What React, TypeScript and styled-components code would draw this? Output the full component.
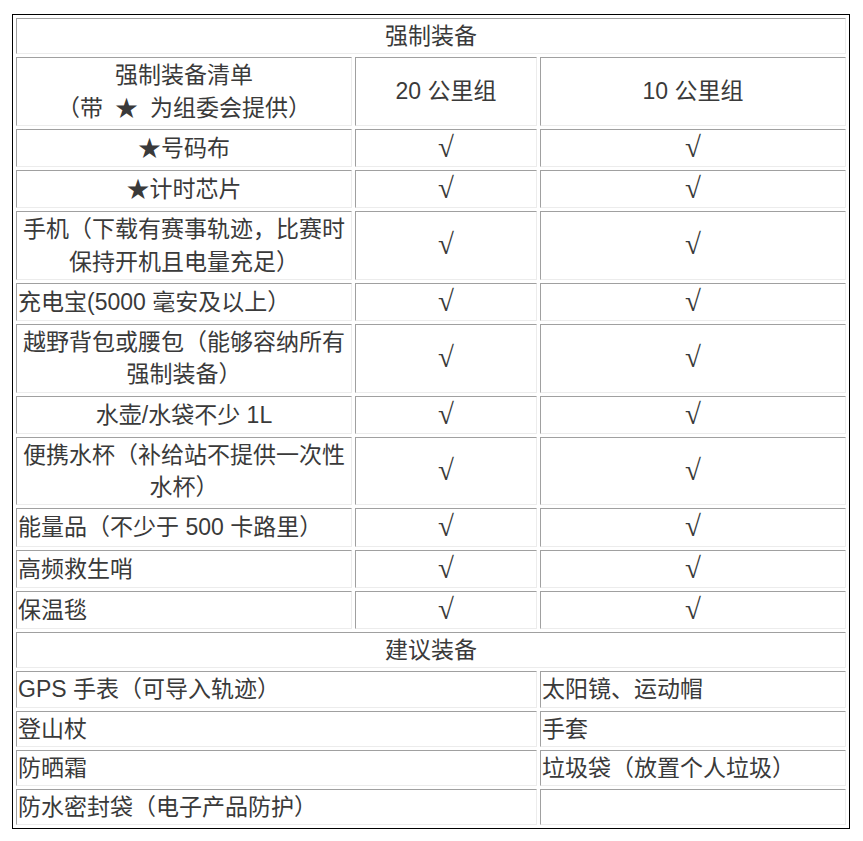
import styled, { createGlobalStyle } from "styled-components";

const GlobalStyle = createGlobalStyle`
  html, body {
    margin: 0;
    padding: 0;
    background: #fff;
  }
  body {
    font-family: "Liberation Sans", "Noto Sans CJK SC", sans-serif;
    color: #3a3a3a;
  }
`;

const Page = styled.div`
  padding: 14px 0 12px 12px;
`;

const Table = styled.table`
  width: 838px;
  table-layout: fixed;
  border-collapse: separate;
  border-spacing: 3px;
  border: 1px solid #000;
  font-size: 23px;
  line-height: 32.25px;
  color: #3a3a3a;
`;

const Cell = styled.td<{ $align?: "left" | "center" }>`
  padding: 1px;
  border: 1px solid;
  border-color: #a0a0a0 #ececec #ececec #a0a0a0;
  text-align: ${(p) => p.$align ?? "center"};
  vertical-align: middle;
`;

const Check = styled.span`
  font-family: "Liberation Serif", serif;
  font-size: 29px;
`;

const Gap = styled.span`
  display: inline-block;
  width: 12px;
`;

type Req = { name: string; align?: "left" | "center" };

const required: Req[] = [
  { name: "★号码布" },
  { name: "★计时芯片" },
  { name: "手机（下载有赛事轨迹，比赛时保持开机且电量充足）" },
  { name: "充电宝(5000 毫安及以上）", align: "left" },
  { name: "越野背包或腰包（能够容纳所有强制装备）" },
  { name: "水壶/水袋不少 1L" },
  { name: "便携水杯（补给站不提供一次性水杯）" },
  { name: "能量品（不少于 500 卡路里）", align: "left" },
  { name: "高频救生哨", align: "left" },
  { name: "保温毯", align: "left" },
];

const suggested: [string, string][] = [
  ["GPS 手表（可导入轨迹）", "太阳镜、运动帽"],
  ["登山杖", "手套"],
  ["防晒霜", "垃圾袋（放置个人垃圾）"],
  ["防水密封袋（电子产品防护）", ""],
];

const App = () => {
  return (
    <>
      <GlobalStyle />
      <Page>
        <Table>
          <colgroup>
            <col style={{ width: 336 }} />
            <col style={{ width: 182 }} />
            <col style={{ width: 306 }} />
          </colgroup>
          <tbody>
            <tr>
              <Cell colSpan={3}>强制装备</Cell>
            </tr>
            <tr>
              <Cell>
                强制装备清单
                <br />
                （带<Gap />★<Gap />为组委会提供）
              </Cell>
              <Cell>20 公里组</Cell>
              <Cell>10 公里组</Cell>
            </tr>
            {required.map((r) => (
              <tr key={r.name}>
                <Cell $align={r.align}>{r.name}</Cell>
                <Cell>
                  <Check>√</Check>
                </Cell>
                <Cell>
                  <Check>√</Check>
                </Cell>
              </tr>
            ))}
            <tr>
              <Cell colSpan={3}>建议装备</Cell>
            </tr>
            {suggested.map(([a, b]) => (
              <tr key={a}>
                <Cell colSpan={2} $align="left">
                  {a}
                </Cell>
                <Cell $align="left">{b || "\u00a0"}</Cell>
              </tr>
            ))}
          </tbody>
        </Table>
      </Page>
    </>
  );
};

export default App;
